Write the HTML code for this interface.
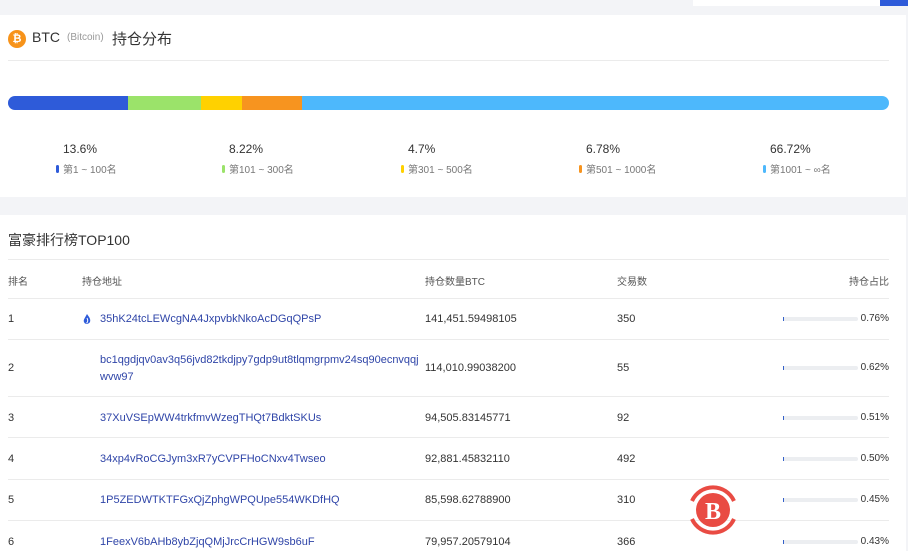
<!DOCTYPE html>
<html><head><meta charset="utf-8"><style>
*{margin:0;padding:0;box-sizing:border-box}
body{width:908px;height:551px;overflow:hidden;background:#f3f4f7;font-family:"Liberation Sans","Noto Sans CJK SC",sans-serif;color:#333;position:relative}
.abs{position:absolute}
.card{position:absolute;left:0;width:906px;background:#fff}
.t{position:absolute;white-space:nowrap}
.line{position:absolute;left:8px;width:881px;height:1px;background:#ebebeb}
.addr{color:#2f45a8;font-size:11px}
.s{font-size:11px}
.pb{position:absolute;left:783px;width:75px;height:4px;background:#eceef1;border-radius:2px}
.pb i{position:absolute;left:0;top:0;width:1px;height:4px;background:#3360c9}
.pc{position:absolute;right:17px;font-size:10px;color:#333}
</style></head><body>
<div class="abs" style="left:693px;top:0;width:187px;height:6px;background:#fff"></div>
<div class="abs" style="left:880px;top:0;width:28px;height:6px;background:#2e5bd9"></div>
<div class="card" style="top:15px;height:182px">
  <div class="abs" style="left:8px;top:15px;width:18px;height:18px;border-radius:50%;background:#f7931a;color:#fff;font-size:11px;font-weight:bold;text-align:center;line-height:18px">₿</div>
  <div class="t" style="left:32px;top:14px;font-size:14px">BTC</div>
  <div class="t" style="left:67px;top:17px;font-size:10px;color:#999">(Bitcoin)</div>
  <div class="t" style="left:112px;top:13px;font-size:15px">持仓分布</div>
  <div class="abs" style="left:8px;top:45px;width:881px;height:1px;background:#ebebeb"></div>
  <div class="abs" style="left:8px;top:81px;width:881px;height:14px;border-radius:7px;overflow:hidden;display:flex">
    <div style="width:120px;background:#2e5bd9"></div><div style="width:73px;background:#9be36a"></div><div style="width:41px;background:#ffd100"></div><div style="width:60px;background:#f7941f"></div><div style="flex:1;background:#4db8fc"></div>
  </div>
  <div class="t" style="left:63px;top:127px;font-size:12px">13.6%</div>
  <div class="t" style="left:229px;top:127px;font-size:12px">8.22%</div>
  <div class="t" style="left:408px;top:127px;font-size:12px">4.7%</div>
  <div class="t" style="left:586px;top:127px;font-size:12px">6.78%</div>
  <div class="t" style="left:770px;top:127px;font-size:12px">66.72%</div>
  <div class="t" style="left:56px;top:146px;font-size:10px;color:#777"><span style="display:inline-block;width:3px;height:8px;border-radius:2px;background:#2e5bd9;margin-right:4px"></span>第1 ~ 100名</div>
  <div class="t" style="left:222px;top:146px;font-size:10px;color:#777"><span style="display:inline-block;width:3px;height:8px;border-radius:2px;background:#9be36a;margin-right:4px"></span>第101 ~ 300名</div>
  <div class="t" style="left:401px;top:146px;font-size:10px;color:#777"><span style="display:inline-block;width:3px;height:8px;border-radius:2px;background:#ffd100;margin-right:4px"></span>第301 ~ 500名</div>
  <div class="t" style="left:579px;top:146px;font-size:10px;color:#777"><span style="display:inline-block;width:3px;height:8px;border-radius:2px;background:#f7941f;margin-right:4px"></span>第501 ~ 1000名</div>
  <div class="t" style="left:763px;top:146px;font-size:10px;color:#777"><span style="display:inline-block;width:3px;height:8px;border-radius:2px;background:#4db8fc;margin-right:4px"></span>第1001 ~ ∞名</div>
</div>
<div class="card" style="top:215px;height:336px">
  <div class="t" style="left:8px;top:15px;font-size:14px">富豪排行榜TOP100</div>
  <div class="line" style="top:44px"></div>
  <div class="t" style="left:8px;top:58px;font-size:10px;color:#555">排名</div>
  <div class="t" style="left:82px;top:58px;font-size:10px;color:#555">持仓地址</div>
  <div class="t" style="left:425px;top:58px;font-size:10px;color:#555">持仓数量BTC</div>
  <div class="t" style="left:617px;top:58px;font-size:10px;color:#555">交易数</div>
  <div class="t" style="left:849px;top:58px;font-size:10px;color:#555">持仓占比</div>
  <div class="line" style="top:83px"></div>

  <div class="t s" style="left:8px;top:98px">1</div>
  <svg class="abs" style="left:83px;top:99px" width="8" height="11" viewBox="0 0 8 11"><path d="M4 0 C6 3 8 5 7 8 C6 10 2 11 1 8 C0 6 2 4 4 0Z" fill="#2e5bd9"/><path d="M4 4 C5 6 5 8 3.5 9" stroke="#fff" stroke-width="1" fill="none"/></svg>
  <div class="t addr" style="left:100px;top:98px">35hK24tcLEWcgNA4JxpvbkNkoAcDGqQPsP</div>
  <div class="t s" style="left:425px;top:98px">141,451.59498105</div>
  <div class="t s" style="left:617px;top:98px">350</div>
  <div class="pb" style="top:102px"><i></i></div><div class="pc" style="top:98px">0.76%</div>
  <div class="line" style="top:124px"></div>

  <div class="t s" style="left:8px;top:147px">2</div>
  <div class="t addr" style="left:100px;top:139px">bc1qgdjqv0av3q56jvd82tkdjpy7gdp9ut8tlqmgrpmv24sq90ecnvqqj</div>
  <div class="t addr" style="left:100px;top:156px">wvw97</div>
  <div class="t s" style="left:425px;top:147px">114,010.99038200</div>
  <div class="t s" style="left:617px;top:147px">55</div>
  <div class="pb" style="top:151px"><i></i></div><div class="pc" style="top:147px">0.62%</div>
  <div class="line" style="top:181px"></div>

  <div class="t s" style="left:8px;top:197px">3</div>
  <div class="t addr" style="left:100px;top:197px">37XuVSEpWW4trkfmvWzegTHQt7BdktSKUs</div>
  <div class="t s" style="left:425px;top:197px">94,505.83145771</div>
  <div class="t s" style="left:617px;top:197px">92</div>
  <div class="pb" style="top:201px"><i></i></div><div class="pc" style="top:197px">0.51%</div>
  <div class="line" style="top:222px"></div>

  <div class="t s" style="left:8px;top:238px">4</div>
  <div class="t addr" style="left:100px;top:238px">34xp4vRoCGJym3xR7yCVPFHoCNxv4Twseo</div>
  <div class="t s" style="left:425px;top:238px">92,881.45832110</div>
  <div class="t s" style="left:617px;top:238px">492</div>
  <div class="pb" style="top:242px"><i></i></div><div class="pc" style="top:238px">0.50%</div>
  <div class="line" style="top:264px"></div>

  <div class="t s" style="left:8px;top:279px">5</div>
  <div class="t addr" style="left:100px;top:279px">1P5ZEDWTKTFGxQjZphgWPQUpe554WKDfHQ</div>
  <div class="t s" style="left:425px;top:279px">85,598.62788900</div>
  <div class="t s" style="left:617px;top:279px">310</div>
  <div class="pb" style="top:283px"><i></i></div><div class="pc" style="top:279px">0.45%</div>
  <div class="line" style="top:305px"></div>

  <div class="t s" style="left:8px;top:321px">6</div>
  <div class="t addr" style="left:100px;top:321px">1FeexV6bAHb8ybZjqQMjJrcCrHGW9sb6uF</div>
  <div class="t s" style="left:425px;top:321px">79,957.20579104</div>
  <div class="t s" style="left:617px;top:321px">366</div>
  <div class="pb" style="top:325px"><i></i></div><div class="pc" style="top:321px">0.43%</div>
</div>
<svg class="abs" style="left:688px;top:484px" width="50" height="52" viewBox="0 0 50 52">
  <path d="M4 17 A23 23 0 0 1 46 17" fill="none" stroke="#e94b43" stroke-width="4"/>
  <path d="M4 35 A23 23 0 0 0 46 35" fill="none" stroke="#e94b43" stroke-width="4"/>
  <circle cx="25" cy="26" r="17" fill="#e94b43"/>
  <text x="25" y="35" text-anchor="middle" font-family="Liberation Serif,serif" font-weight="bold" font-size="24" fill="#fff">B</text>
  <rect x="21" y="7" width="2" height="5" fill="#fff" opacity="0"/>
</svg>
</body></html>
